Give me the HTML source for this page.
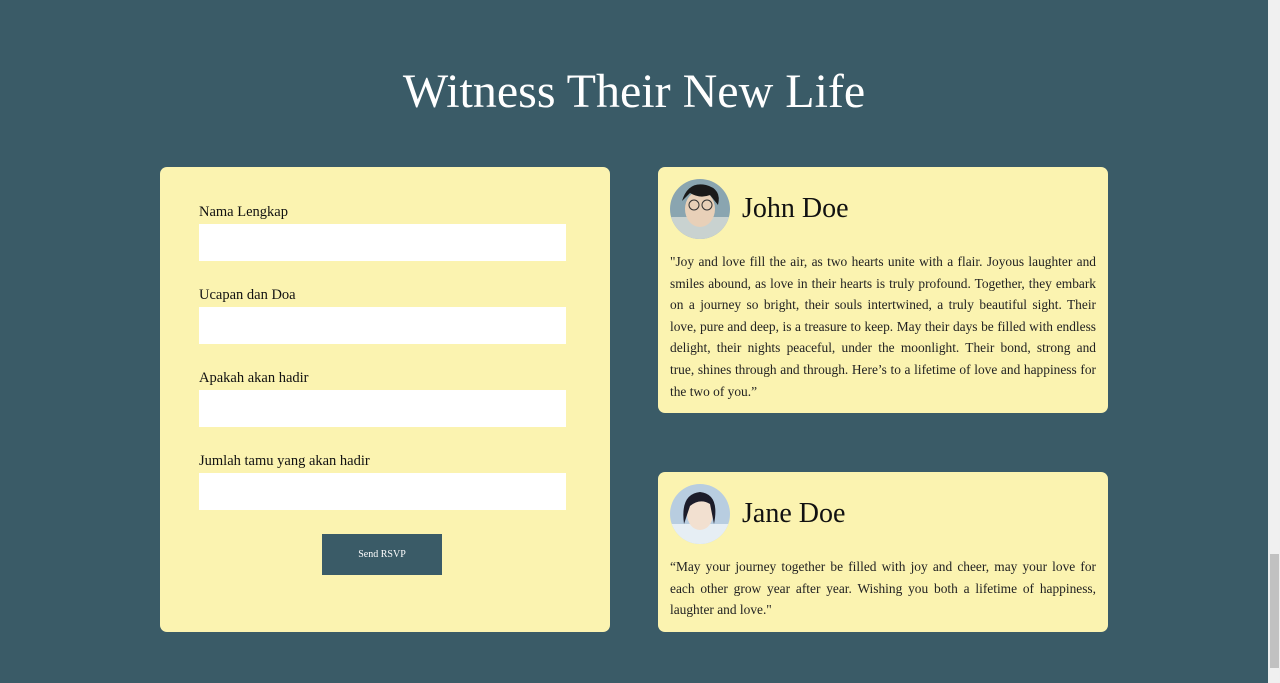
<!DOCTYPE html>
<html><head><style>
*{box-sizing:border-box;margin:0;padding:0}
body{width:1280px;height:683px;overflow:hidden;background:#3a5b67;font-family:"Liberation Serif",serif;position:relative}
h1{position:absolute;left:0;width:1268px;top:64px;text-align:center;color:#fff;font-weight:normal;font-size:48px}
.card{position:absolute;background:#fbf3b0;border-radius:7px}
.lbl{position:absolute;left:39px;font-size:14.5px;color:#111}
.inp{position:absolute;left:39px;width:367px;height:37px;background:#fff}
.btn{position:absolute;left:162px;top:367px;width:120px;height:41px;background:#3a5b67;color:#fff;font-size:10px;text-align:center;line-height:41px}
.av{position:absolute;left:12px;top:12px;width:60px;height:60px;border-radius:50%;overflow:hidden}
.nm{position:absolute;left:84px;top:26px;font-size:28px;color:#111}
.tx{position:absolute;left:12px;right:12px;top:84px;font-size:13.4px;line-height:21.6px;color:#222}
.tx div{text-align:justify;text-align-last:justify;height:21.6px}
.tx div.l{text-align-last:left}
.sb{position:absolute;left:1268px;top:0;width:12px;height:683px;background:#f0f0f0}
</style></head><body>
<h1>Witness Their New Life</h1>
<div class="card" style="left:160px;top:167px;width:450px;height:465px">
<div class="lbl" style="top:37px">Nama Lengkap</div><div class="inp" style="top:57px"></div>
<div class="lbl" style="top:120px">Ucapan dan Doa</div><div class="inp" style="top:140px"></div>
<div class="lbl" style="top:203px">Apakah akan hadir</div><div class="inp" style="top:223px"></div>
<div class="lbl" style="top:286px">Jumlah tamu yang akan hadir</div><div class="inp" style="top:306px"></div>
<div class="btn">Send RSVP</div>
</div>
<div class="card" style="left:658px;top:167px;width:450px;height:246px">
<div class="av"><svg width="60" height="60"><rect width="60" height="60" fill="#8aa5b0"/><rect y="38" width="60" height="22" fill="#c9d2d0"/><ellipse cx="30" cy="30" rx="15" ry="18" fill="#e8d0b8"/><path d="M12 22Q18 2 36 6Q52 10 48 26L40 16Q30 20 20 14Z" fill="#1a1a1a"/><circle cx="24" cy="26" r="5" fill="none" stroke="#333"/><circle cx="37" cy="26" r="5" fill="none" stroke="#333"/></svg></div>
<div class="nm">John Doe</div>
<div class="tx">
<div>"Joy and love fill the air, as two hearts unite with a flair. Joyous laughter and</div>
<div>smiles abound, as love in their hearts is truly profound. Together, they embark</div>
<div>on a journey so bright, their souls intertwined, a truly beautiful sight. Their</div>
<div>love, pure and deep, is a treasure to keep. May their days be filled with endless</div>
<div>delight, their nights peaceful, under the moonlight. Their bond, strong and</div>
<div>true, shines through and through. Here’s to a lifetime of love and happiness for</div>
<div class="l">the two of you.”</div>
</div>
</div>
<div class="card" style="left:658px;top:472px;width:450px;height:160px">
<div class="av"><svg width="60" height="60"><rect width="60" height="60" fill="#b8cde0"/><rect y="40" width="60" height="20" fill="#e6eef4"/><ellipse cx="30" cy="30" rx="13" ry="16" fill="#f2e0d0"/><path d="M14 40Q10 10 30 8Q50 10 44 40L40 20Q30 14 20 22Z" fill="#1c1c2a"/></svg></div>
<div class="nm">Jane Doe</div>
<div class="tx">
<div>“May your journey together be filled with joy and cheer, may your love for</div>
<div>each other grow year after year. Wishing you both a lifetime of happiness,</div>
<div class="l">laughter and love."</div>
</div>
</div>
<div class="sb"><div style="position:absolute;left:2px;top:554px;width:9px;height:114px;background:#c1c1c1"></div></div>
</body></html>
